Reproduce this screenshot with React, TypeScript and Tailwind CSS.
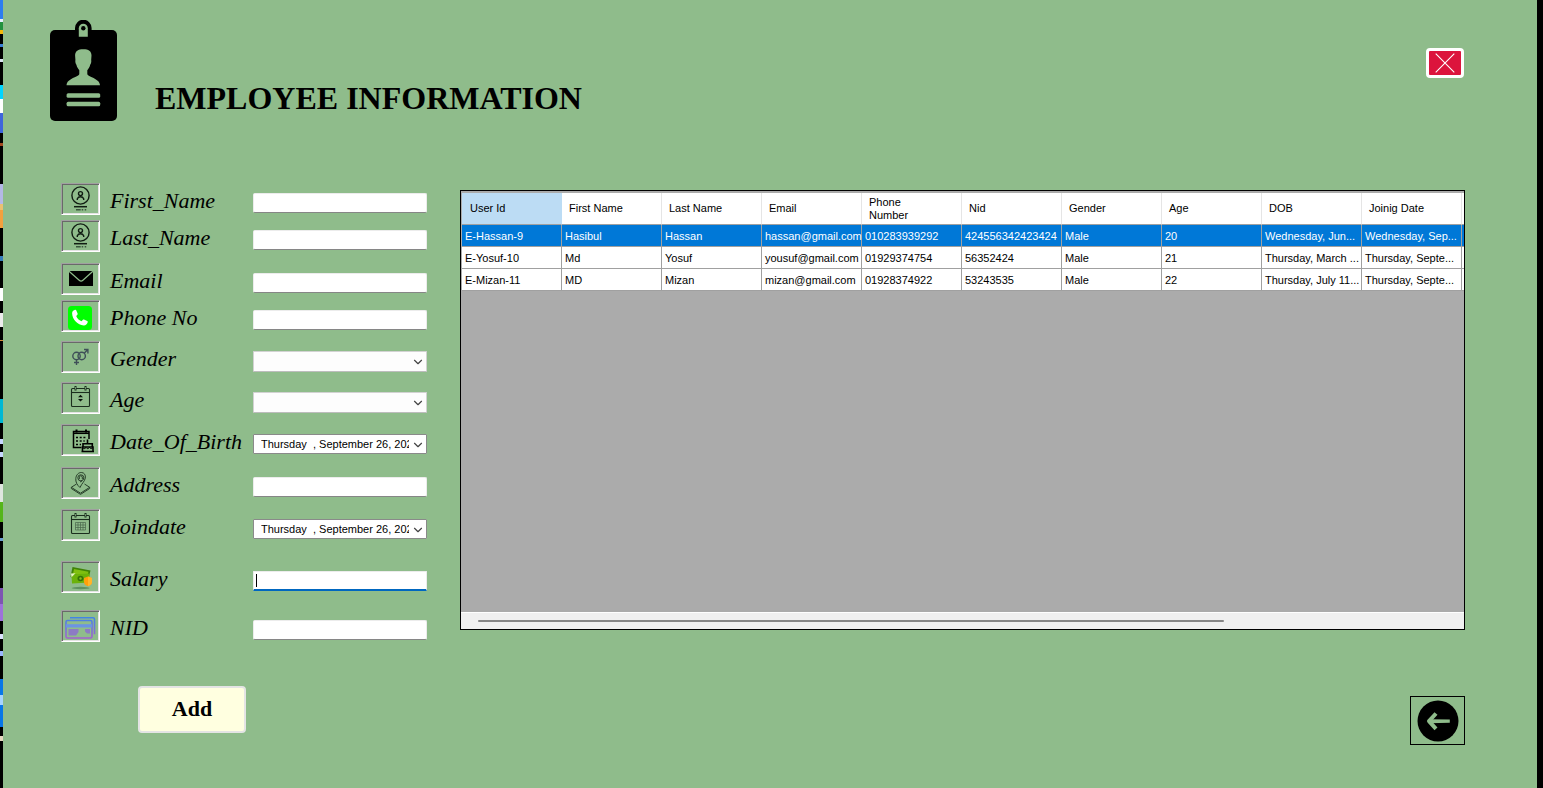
import React from "react";
import { ChevronDown } from "lucide-react";

type FieldKind = "text" | "select" | "date";

interface Field {
  id: string;
  label: string;
  kind: FieldKind;
  gap: string;
  icon: React.ReactNode;
  active?: boolean;
}

function Glyph({ children }: { children: React.ReactNode }) {
  return (
    <svg viewBox="0 0 37 30" className="block h-full w-full" fill="none" aria-hidden="true">
      {children}
    </svg>
  );
}

const personIcon = (
  <Glyph>
    <g stroke="#101c12">
      <circle cx="18.500" cy="11.500" r="8.600" strokeWidth="1.400" />
      <circle cx="18.500" cy="9.600" r="2" strokeWidth="1.400" />
      <path d="M15.300 16v-1.200c.6-1.400 1.900-2 3.200-2s2.600.6 3.200 2V16" strokeWidth="1.400" />
      <path d="M12 22.700h13" strokeWidth="1.500" />
      <path d="M14 25.700h4.700M19.700 25.700h1.500M22.700 25.700h1.500" strokeWidth="1.600" stroke="#3c563e" />
    </g>
  </Glyph>
);

const mailIcon = (
  <Glyph>
    <rect x="7" y="7" width="24" height="15" fill="#000" />
    <path d="M7 7.200l10.200 9c1.100 1 2.600 1 3.700 0l10-9" stroke="#8fbc8b" strokeWidth="1.200" />
  </Glyph>
);

const phoneIcon = (
  <Glyph>
    <rect x="6" y="5" width="24" height="24" rx="3.500" fill="#00ff00" />
    <path
      d="M11.200 9.800l1.800-1c.6-.2 1 0 1.200.5l1.400 3.300c.2.6 0 1-.4 1.400l-1 1c1 2.400 2.700 4.200 5.300 5.300l1.200-1.400c.4-.4.8-.5 1.300-.3l3.200 1.500c.6.3.7.7.5 1.200-.6 1.900-2 3.200-4 3.100-6-.4-11.500-6.200-11.600-12.200 0-1 .4-1.800 1.100-2.400z"
      fill="#fff"
    />
  </Glyph>
);

const genderIcon = (
  <Glyph>
    <g stroke="#3f4f58" strokeWidth="1.400">
      <circle cx="14.500" cy="14" r="3.700" />
      <circle cx="19.700" cy="14" r="3.700" />
      <path d="M14.500 17.700V23M12 20.500h5M22.200 11.200l3.600-3.600M22 7.500h3.900v3.900" />
    </g>
  </Glyph>
);

const calendarFrame = (
  <g stroke="#1b2e1e" strokeWidth="1.100">
    <rect x="9.500" y="5.500" width="18" height="18" rx="1" />
    <path d="M9.500 9.500h18" />
    <path d="M13.500 3v4.500M23.500 3v4.500" strokeWidth="2" />
    <path d="M13.500 4v2.500M23.500 4v2.500" stroke="#8fbc8b" strokeWidth=".7" />
  </g>
);

const ageIcon = (
  <Glyph>
    {calendarFrame}
    <path d="M16 14.300l2.500-2.600 2.500 2.600zM16 16l2.500 2.600L21 16z" fill="#0b140c" />
  </Glyph>
);

const joinIcon = (
  <Glyph>
    {calendarFrame}
    <path
      d="M13.500 12.500h10v7.500h-10zM13.500 15h10M13.500 17.500h10M16 12.500V20M18.500 12.500V20M21 12.500V20"
      stroke="#48654a"
      strokeWidth=".7"
    />
  </Glyph>
);

const birthIcon = (
  <Glyph>
    <path d="M19.500 22.500H11.500V6.500h15.500V14" stroke="#000" strokeWidth="1.500" />
    <path d="M11 8.300h16" stroke="#000" strokeWidth="1.500" />
    <path d="M14.500 4.500v3M24 4.500v3" stroke="#000" strokeWidth="2" />
    <path d="M14 12.500h2M17.700 12.500h2M21.400 12.500h2M14 16h2M17.700 16h2M21.400 16h1.300M14 19.500h2M17.700 19.500h1.300" stroke="#000" strokeWidth="1.700" />
    <path d="M25.500 14.500V18M21 22v-3.200h9.300V22M19.500 26.500H32M20.500 26.200v-4.200h10.500v4.200" stroke="#000" strokeWidth="1.600" />
    <path d="M20.500 22.500c1.100 1.500 2.300 1.500 3.500 0 1.100 1.500 2.300 1.500 3.500 0 1.100 1.500 2.300 1.500 3.500 0" stroke="#000" />
  </Glyph>
);

const addressIcon = (
  <Glyph>
    <g stroke="#28402a" strokeWidth="1">
      <path d="M14.500 16l-5.200 3.300 9.200 5.900 9.200-5.900-5.200-3.300" />
      <path d="M9.300 19.300v1.200l9.200 5.900 9.200-5.900v-1.200" />
      <path d="M18 19.500c-3-2.500-4.500-5.500-4.200-9 .3-3.500 2.500-6 5.500-6s4.500 2.500 4 5.500c-.6 3.500-3.300 5-5.300 9.500z" />
      <circle cx="18.800" cy="9.800" r="3" />
      <path d="M17.300 11v-2l1.500-1.500 1.500 1.500v2M18 14l2-1" />
    </g>
  </Glyph>
);

const salaryIcon = (
  <Glyph>
    <ellipse cx="18.700" cy="26" rx="9" ry="1.200" fill="#5f9160" />
    <path d="M10.500 5l18 3.500-2.800 11L8.500 15z" fill="#3f8207" />
    <path d="M12 7l14.500 2.800-1.500 5L11 12z" fill="#7fbf10" />
    <path d="M9.500 12.500l18-1v9l-17.500 1z" fill="#6bb20a" />
    <path d="M9 11.500l4.500-.3-4 4z" fill="#e4f5c0" />
    <ellipse cx="18.500" cy="16.500" rx="3" ry="2.700" fill="#347406" />
    <circle cx="18.500" cy="16.500" r="1.200" fill="#83bd23" />
    <path d="M22 16l4-1.500 4 1.500v4c0 2.300-1.700 3.500-4 4.300-2.300-.8-4-2-4-4.300z" fill="#ff9f0a" />
    <path d="M26 14.500l4 1.500v4c0 2.300-1.700 3.500-4 4.300z" fill="#ffb52a" />
  </Glyph>
);

const nidIcon = (
  <Glyph>
    <defs>
      <linearGradient id="cardTone" x1="0" y1="6" x2="0" y2="28" gradientUnits="userSpaceOnUse">
        <stop offset="0" stopColor="#3f86e6" />
        <stop offset="1" stopColor="#a65fce" />
      </linearGradient>
    </defs>
    <g stroke="url(#cardTone)" strokeWidth="1.600">
      <path d="M8 6.700h23c1 0 1.500.5 1.500 1.500v15" />
      <rect x="4" y="9.500" width="26" height="17.500" rx="1.500" />
    </g>
    <path d="M4 13.200h26v3.300H4z" fill="#6c94e4" />
    <path d="M6.500 18h10v3l-2.500 3.500H6.500zM23 18h5v4.500h-3l-2-2z" fill="#8c7bc4" />
  </Glyph>
);

const fields: Field[] = [
  { id: "first-name", label: "First_Name", kind: "text", gap: "mt-0", icon: personIcon },
  { id: "last-name", label: "Last_Name", kind: "text", gap: "mt-[5px]", icon: personIcon },
  { id: "email", label: "Email", kind: "text", gap: "mt-[11px]", icon: mailIcon },
  { id: "phone", label: "Phone No", kind: "text", gap: "mt-[5px]", icon: phoneIcon },
  { id: "gender", label: "Gender", kind: "select", gap: "mt-[9px]", icon: genderIcon },
  { id: "age", label: "Age", kind: "select", gap: "mt-[9px]", icon: ageIcon },
  { id: "birth", label: "Date_Of_Birth", kind: "date", gap: "mt-[10px]", icon: birthIcon },
  { id: "address", label: "Address", kind: "text", gap: "mt-[11px]", icon: addressIcon },
  { id: "join", label: "Joindate", kind: "date", gap: "mt-[10px]", icon: joinIcon },
  { id: "salary", label: "Salary", kind: "text", gap: "mt-[20px]", icon: salaryIcon, active: true },
  { id: "nid", label: "NID", kind: "text", gap: "mt-[17px]", icon: nidIcon },
];

const columns = ["User Id", "First Name", "Last Name", "Email", "Phone Number", "Nid", "Gender", "Age", "DOB", "Joinig Date", ""];

const rows = [
  ["E-Hassan-9", "Hasibul", "Hassan", "hassan@gmail.com", "010283939292", "424556342423424", "Male", "20", "Wednesday, Jun...", "Wednesday, Sep...", ""],
  ["E-Yosuf-10", "Md", "Yosuf", "yousuf@gmail.com", "01929374754", "56352424", "Male", "21", "Thursday, March ...", "Thursday, Septe...", ""],
  ["E-Mizan-11", "MD", "Mizan", "mizan@gmail.com", "01928374922", "53243535", "Male", "22", "Thursday, July 11...", "Thursday, Septe...", ""],
];

function FieldControl({ field }: { field: Field }) {
  if (field.kind === "select") {
    return (
      <div className="relative">
        <select
          id={field.id}
          defaultValue=""
          className="block h-[21px] w-full appearance-none rounded-[1px] border border-[#d2d2d2] border-b-[#bdbdbd] bg-[#fdfdfd] px-2 text-[11px] outline-none"
        >
          <option value=""></option>
        </select>
        <ChevronDown className="pointer-events-none absolute top-1 right-[2px] size-[14px] text-[#444]" strokeWidth={2} />
      </div>
    );
  }
  if (field.kind === "date") {
    return (
      <div className="relative flex h-5 items-center rounded-[1px] border border-[#8a8a8a] bg-white pr-[17px] pl-[7px]">
        <input
          id={field.id}
          type="text"
          defaultValue="Thursday  , September 26, 2024"
          className="h-[18px] w-full min-w-0 bg-transparent text-[11px] text-black outline-none"
        />
        <ChevronDown className="pointer-events-none absolute top-[3px] right-[1px] size-[14px] text-[#444]" strokeWidth={2} />
      </div>
    );
  }
  return (
    <div className="relative">
      <input
        id={field.id}
        type="text"
        className={
          field.active
            ? "block h-5 w-full rounded-[1px] border border-b-2 border-[#ececec] border-b-[#0067c0] bg-white px-1 text-[11px] caret-transparent outline-none"
            : "block h-5 w-full rounded-[2px] border border-[#ececec] border-b-[#868686] bg-white px-1 text-[11px] outline-none"
        }
      />
      {field.active && <span className="absolute top-[3px] left-[3px] h-[13px] w-px bg-black" />}
    </div>
  );
}

function DesktopEdge() {
  return (
    <div className="flex w-[3px] shrink-0 flex-col bg-black" aria-hidden="true">
      <div className="h-3 bg-[#2d7df0]" />
      <div className="h-[7px] bg-[#2d7df0]" />
      <div className="h-[3px] bg-[#e8efff]" />
      <div className="h-2 bg-[#23913f]" />
      <div className="h-[4px] bg-[#f2b90c]" />
      <div className="mt-[10px] h-[3px] bg-[#3b82d6]" />
      <div className="mt-3 h-[3px] bg-[#d9e4f0]" />
      <div className="mt-[23px] h-[14px] bg-[#00d5ff]" />
      <div className="h-[14px] bg-white" />
      <div className="h-5 bg-[#3f66dc]" />
      <div className="mt-[10px] h-[3px] bg-[#a34a20]" />
      <div className="mt-[38px] h-5 bg-[#b4b8e6]" />
      <div className="h-[6px] bg-[#eac070]" />
      <div className="h-[18px] bg-[#f3a03e]" />
      <div className="mt-[28px] h-[5px] bg-[#367dba]" />
      <div className="mt-[27px] h-[13px] bg-white" />
      <div className="mt-[12px] h-[14px] bg-[#ececec]" />
      <div className="mt-[13px] h-px bg-[#d68a38]" />
      <div className="mt-[58px] h-[24px] bg-[#00b8d4]" />
      <div className="mt-4 h-[5px] bg-[#c7d8ff]" />
      <div className="mt-2 h-[5px] bg-[#c7d8ff]" />
      <div className="mt-[27px] h-[18px] bg-[#dfe6df]" />
      <div className="h-[20px] bg-[#55b51b]" />
      <div className="mt-[16px] h-[3px] bg-[#6c9fd0]" />
      <div className="mt-[47px] h-[16px] bg-[#7d55b2]" />
      <div className="h-[17px] bg-[#9d72da]" />
      <div className="mt-[13px] h-[5px] bg-[#dbe2ff]" />
      <div className="mt-[12px] h-[5px] bg-[#9bb6ff]" />
      <div className="mt-[23px] h-[16px] bg-[#0877e8]" />
      <div className="h-[10px] bg-[#a8d4ff]" />
      <div className="h-[22px] bg-[#0877e8]" />
      <div className="mt-[9px] h-[5px] bg-[#e5d8c0]" />
    </div>
  );
}

export default function App() {
  return (
    <div className="flex min-h-screen bg-[#8fbc8b] font-['Liberation_Sans',Arial,sans-serif] text-black">
      <DesktopEdge />

      <main className="min-w-0 flex-1 pt-5 pr-[72px] pb-10 pl-[46px]">
        <header className="flex items-start pr-px">
          <svg viewBox="0 0 69 102" className="h-[102px] w-[69px] shrink-0" aria-hidden="true">
            <rect x="1" y="10" width="67" height="91" rx="5" fill="#000" />
            <path d="M26 14V8a8.300 8.300 0 0 1 16.600 0v6z" fill="#000" />
            <path d="M29.800 16.700V8.200a4.500 4.500 0 0 1 9 0v8.500z" fill="#8fbc8b" />
            <circle cx="34.300" cy="8.300" r="2.200" fill="#000" />
            <path
              d="M34.300 29.200c5.200 0 8.200 1.900 8.200 6.200l-.3 4.400c.4 2.700-.5 4.200-1 5-.6 2.400-1.600 4-2.900 5.400v3.500c0 3.500 12.700 4.300 12.700 11.600H17.600c0-7.300 12.700-8.100 12.700-11.600v-3.500c-1.300-1.400-2.300-3-2.900-5.400-.5-.8-1.400-2.300-1-5l-.3-4.400c0-4.300 3-6.200 8.200-6.200z"
              fill="#8fbc8b"
            />
            <rect x="17.600" y="73.200" width="33.600" height="4.500" rx="1.500" fill="#8fbc8b" />
            <rect x="17.600" y="81.700" width="33.600" height="4.500" rx="1.500" fill="#8fbc8b" />
          </svg>
          <h1 className="mt-[60px] ml-[37px] font-['Liberation_Serif',serif] text-[32px] leading-9 font-bold whitespace-nowrap">
            EMPLOYEE INFORMATION
          </h1>
          <button
            type="button"
            aria-label="Close"
            className="mt-7 ml-auto flex h-[30px] w-[38px] shrink-0 items-center justify-center rounded-[4px] border-[3px] border-white bg-[#dc143c]"
          >
            <svg viewBox="0 0 20 20" className="size-5" aria-hidden="true">
              <path d="M.7.7l18.600 18.600M19.300.7L.7 19.300" stroke="#fff" strokeWidth="1.100" />
            </svg>
          </button>
        </header>

        <div className="mt-[61px] flex items-start gap-[33px]">
          <form id="employee-form" className="ml-3 w-[366px] shrink-0" onSubmit={(e) => e.preventDefault()}>
            {fields.map((field) => (
              <div key={field.id} className={`grid h-8 grid-cols-[39px_1fr_174px] items-start ${field.gap}`}>
                <div className="h-8 border border-t-[#a0a0a0] border-r-white border-b-white border-l-[#a0a0a0] shadow-[inset_1px_1px_0_#696969,inset_-1px_-1px_0_#e3e3e3]">
                  {field.icon}
                </div>
                <label
                  htmlFor={field.id}
                  className="pt-[2px] pl-[10px] font-['Liberation_Serif',serif] text-[22px] leading-8 whitespace-nowrap italic"
                >
                  {field.label}
                </label>
                <div className="pt-[10px]">
                  <FieldControl field={field} />
                </div>
              </div>
            ))}
          </form>

          <section className="mt-[7px] flex h-[440px] min-w-0 flex-1 flex-col border border-black bg-[#ababab]">
            <div className="min-h-0 flex-1 overflow-hidden pt-[2px] pl-px">
              <table className="w-[1100px] table-fixed border-separate border-spacing-0 text-left text-[11px] leading-[13px]">
                <thead>
                  <tr className="h-8">
                    {columns.map((name, i) => (
                      <th
                        key={i}
                        scope="col"
                        className={
                          i === 0
                            ? "border-r border-b border-r-[#bcdcf4] border-b-[#a0a0a0] bg-[#bcdcf4] px-2 py-0 align-middle font-normal"
                            : "border-r border-b border-r-[#e5e5e5] border-b-[#a0a0a0] bg-white px-[7px] py-0 pr-8 align-middle font-normal"
                        }
                      >
                        {name}
                      </th>
                    ))}
                  </tr>
                </thead>
                <tbody>
                  {rows.map((row, r) => (
                    <tr key={r} className={r === 0 ? "h-[22px] bg-[#0078d7] text-white" : "h-[22px] bg-white"}>
                      {row.map((value, c) => (
                        <td key={c} className="border-r border-b border-[#a0a0a0] pt-[2px] pr-0 pb-0 pl-[3px] align-middle whitespace-nowrap">
                          {value}
                        </td>
                      ))}
                    </tr>
                  ))}
                </tbody>
              </table>
            </div>
            <div className="flex h-[17px] shrink-0 items-center border-t border-white bg-[#f0f0f0] px-[17px]">
              <div className="h-[2px] w-[77%] rounded-full bg-[#868686]" />
            </div>
          </section>
        </div>

        <footer className="mt-[44px] flex items-start justify-between pl-[89px]">
          <button
            type="submit"
            form="employee-form"
            className="h-[47px] w-[108px] rounded-[4px] border-2 border-[#e4e4e4] bg-[#ffffe0] pb-[2px] font-['Liberation_Serif',serif] text-[22px] font-bold"
          >
            Add
          </button>
          <button type="button" aria-label="Back" className="mt-[10px] flex h-[49px] w-[55px] items-center justify-center border border-black">
            <svg viewBox="0 0 42 42" className="size-[42px]" aria-hidden="true">
              <circle cx="21" cy="21" r="20.500" fill="#000" />
              <path
                d="M19 13.500l-7 7.700 7 7.700"
                fill="none"
                stroke="#8fbc8b"
                strokeWidth="4"
                strokeLinejoin="round"
              />
              <path d="M12 19.200l20.800.4v3.200L12 23.200z" fill="#8fbc8b" />
            </svg>
          </button>
        </footer>
      </main>

      <div className="w-[6px] shrink-0 bg-black" />
    </div>
  );
}
